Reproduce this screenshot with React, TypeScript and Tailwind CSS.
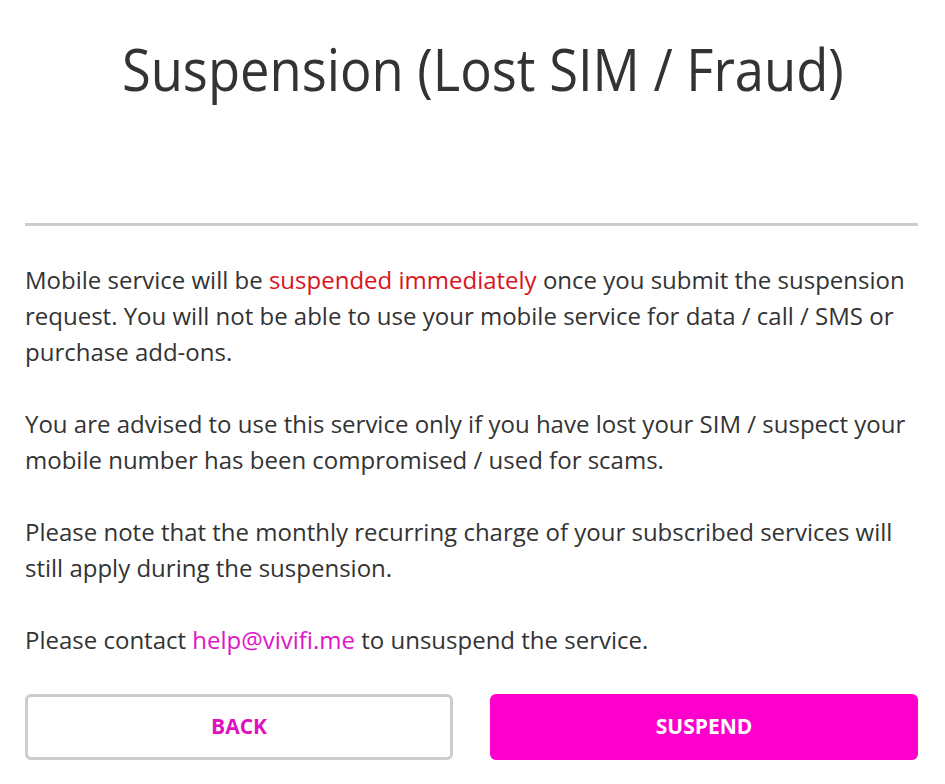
export default function App() {
  return (
    <div className="min-h-screen bg-white font-['Open_Sans',sans-serif] text-[#333333]">
      <div className="pl-[25px] pr-[27px]">
        <h1 className="pt-[33px] pl-[22px] text-center text-[58px] leading-[72px] font-normal text-[#333333]">
          <span className="inline-block scale-x-[0.905]">Suspension (Lost SIM / Fraud)</span>
        </h1>
        <div className="mt-[118px] h-[3px] bg-[#cccccc]" />
        <div className="mt-[36px] flex flex-col gap-[36px] text-[24px] leading-[36px]">
          <p>
            Mobile service will be <span className="text-[#d7141c]">suspended immediately</span> once you submit the
            suspension request. You will not be able to use your mobile service for data / call / SMS or purchase
            add-ons.
          </p>
          <p>
            You are advised to use this service only if you have lost your SIM / suspect your mobile number has been
            compromised / used for scams.
          </p>
          <p>
            Please note that the monthly recurring charge of your subscribed services will still apply during the
            suspension.
          </p>
          <p>
            Please contact <a className="text-[#e014c8]">help@vivifi.me</a> to unsuspend the service.
          </p>
        </div>
        <div className="mt-[36px] grid grid-cols-2 gap-[37px]">
          <button className="flex h-[66px] items-center justify-center rounded-[6px] border-[3px] border-[#cccccc] bg-white text-[21px] font-bold text-[#e010c0]">
            BACK
          </button>
          <button className="flex h-[66px] items-center justify-center rounded-[6px] bg-[#ff00cc] text-[21px] font-bold text-white">
            SUSPEND
          </button>
        </div>
      </div>
    </div>
  );
}
